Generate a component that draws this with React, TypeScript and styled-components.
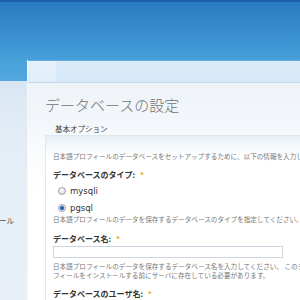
import React from 'react'
import styled, { createGlobalStyle } from 'styled-components'

const GlobalStyle = createGlobalStyle`
  html, body {
    margin: 0;
    padding: 0;
    width: 300px;
    height: 300px;
    overflow: hidden;
    background: #ffffff;
    font-family: "Noto Sans CJK JP", "DejaVu Sans", sans-serif;
  }
`

const App = () => {
  return (
    <>
      <GlobalStyle />
      <Page>
        <Header />
        <Main>
          <Sidebar>
            <SideItem>日本語プロフィール</SideItem>
          </Sidebar>
          <Panel>
            <Strip>
              <Tab />
            </Strip>
            <Body>
              <Heading>データベースの設定</Heading>
              <Legend>基本オプション</Legend>
              <Fieldset>
                <Description>日本語プロフィールのデータベースをセットアップするために、以下の情報を入力してください。</Description>

                <Label>データベースのタイプ: <Star>*</Star></Label>
                <RadioRow>
                  <Radio />
                  <RadioText>mysqli</RadioText>
                </RadioRow>
                <RadioRow>
                  <Radio checked />
                  <RadioText>pgsql</RadioText>
                </RadioRow>
                <Description>日本語プロフィールのデータを保存するデータベースのタイプを指定してください。</Description>

                <Label gap={9}>データベース名: <Star>*</Star></Label>
                <Input />
                <Description top={4}>日本語プロフィールのデータを保存するデータベース名を入力してください。 このデータベースは日本語プロ</Description>
                <Description>フィールをインストールする前にサーバに存在している必要があります。</Description>

                <Label>データベースのユーザ名: <Star>*</Star></Label>
              </Fieldset>
            </Body>
          </Panel>
        </Main>
      </Page>
    </>
  )
}

export default App

const Page = styled.div`
display: flex;
flex-direction: column;
width: 300px;
height: 300px;
overflow: hidden;
`
const Header = styled.div`
height: 60px;
flex-shrink: 0;
border-top: 2px solid #1c5ea8;
box-sizing: border-box;
background: linear-gradient(#2a7cc0, #3b90d0 60%, #48a0da);
`
const Main = styled.div`
display: flex;
flex: 1;
`
const Sidebar = styled.div`
width: 27px;
flex-shrink: 0;
background: linear-gradient(#4aa2dc, #52a8de 21px, #d9e6f2 21px, #e4edf6 80px, #eaf1f8);
padding-top: 155px;
padding-right: 13px;
box-sizing: border-box;
display: flex;
justify-content: flex-end;
align-items: flex-start;
overflow: hidden;
`
const SideItem = styled.div`
white-space: nowrap;
font-size: 7.5px;
line-height: 12px;
color: #555;
`
const Panel = styled.div`
flex: 1;
display: flex;
flex-direction: column;
border-left: 1px solid #f4f8fc;
min-width: 0;
`
const Strip = styled.div`
height: 21px;
flex-shrink: 0;
border-top: 1px solid #62acdf;
border-bottom: 1px solid #c3d9ee;
background: linear-gradient(#dbebf9, #d6e8f8);
display: flex;
`
const Tab = styled.div`
width: 28px;
background: linear-gradient(#e6f1fb, #e0eefa);
`
const Body = styled.div`
flex: 1;
background: linear-gradient(#eef3f8, #f3f7fb 40px, #fafcfd 70px, #ffffff 110px);
padding: 13px 0 0 17px;
overflow: hidden;
`
const Heading = styled.div`
font-size: 15px;
line-height: 18px;
font-weight: 300;
color: #727272;
white-space: nowrap;
`
const Legend = styled.div`
font-size: 7.5px;
line-height: 10px;
color: #444;
margin: 10px 0 0 10px;
white-space: nowrap;
`
const Fieldset = styled.div`
margin-top: 1px;
border: 1px solid #dfe7ef;
border-right: none;
background: linear-gradient(#e6eff7, #f6f9fc 12px, #ffffff 22px);
padding: 16px 0 0 7px;
min-height: 200px;
`
const Description = styled.div<{ top?: number }>`
font-size: 6.6px;
line-height: 9px;
color: #777;
white-space: nowrap;
margin-top: ${({ top }) => (top ?? 0)}px;
`
const Label = styled.div<{ gap?: number }>`
font-size: 8px;
line-height: 12px;
font-weight: 700;
color: #333;
margin-top: ${({ gap }) => gap ?? 8}px;
white-space: nowrap;
`
const Star = styled.span`
color: #f5a51c;
margin-left: 3px;
`
const RadioRow = styled.div`
display: flex;
align-items: center;
gap: 4px;
height: 14px;
margin-top: 3px;
padding-left: 5px;
`
const Radio = styled.span<{ checked?: boolean }>`
width: 8px;
height: 8px;
border-radius: 50%;
box-sizing: border-box;
border: 1px solid #9aa3ad;
background: ${({ checked }) =>
  checked
    ? "radial-gradient(circle, #1f4f8f 0, #3672b8 1.8px, #e8eef5 2.6px, #cfd6de 100%)"
    : "radial-gradient(circle at 40% 35%, #ffffff, #dfe3e8 60%, #c5cbd2)"};
`
const RadioText = styled.span`
font-family: "DejaVu Sans", sans-serif;
font-size: 8.5px;
color: #333;
line-height: 14px;
`
const Input = styled.div`
margin-top: 1px;
width: 230px;
height: 12px;
box-sizing: border-box;
border: 1px solid #ccd6e0;
background: #fff;
`
